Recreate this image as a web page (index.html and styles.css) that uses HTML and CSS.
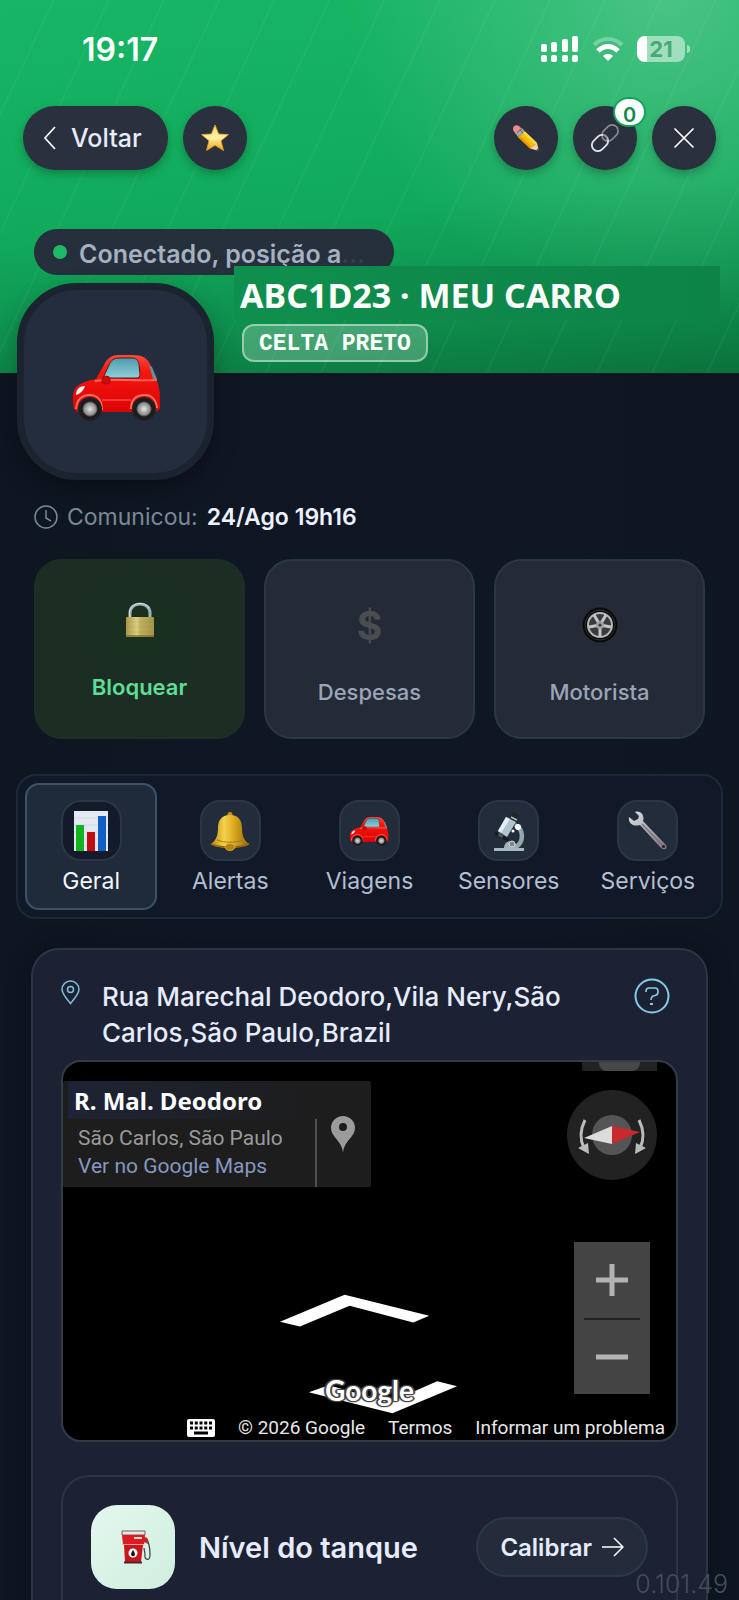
FILE: index.html
```html
<!DOCTYPE html>
<html lang="pt-BR">
<head>
    <meta charset="UTF-8">
    <meta name="viewport" content="width=device-width, initial-scale=1.0">
    <title>ABC1D23 · Meu Carro</title>
    <link rel="stylesheet" href="styles.css">
</head>
<body>

    <!-- shared icons -->
    <svg class="defs" width="0" height="0" aria-hidden="true">
        <defs>
            <linearGradient id="car-red" x1="0" y1="0" x2="0" y2="1">
                <stop offset="0" stop-color="#ff4a3c"/>
                <stop offset="0.3" stop-color="#f8150f"/>
                <stop offset="1" stop-color="#d80505"/>
            </linearGradient>
            <linearGradient id="car-glass" x1="0" y1="0" x2="0" y2="1">
                <stop offset="0" stop-color="#4d9bac"/>
                <stop offset="1" stop-color="#8fd0da"/>
            </linearGradient>
            <radialGradient id="car-wheel">
                <stop offset="0" stop-color="#e4e4e4"/>
                <stop offset="0.5" stop-color="#8c8c8c"/>
                <stop offset="0.58" stop-color="#555"/>
                <stop offset="0.66" stop-color="#1a1a1a"/>
                <stop offset="1" stop-color="#222"/>
            </radialGradient>
            <linearGradient id="gold" x1="0" y1="0" x2="1" y2="0">
                <stop offset="0" stop-color="#b98412"/>
                <stop offset="0.35" stop-color="#f6d24c"/>
                <stop offset="0.6" stop-color="#dcaa20"/>
                <stop offset="1" stop-color="#96690b"/>
            </linearGradient>
            <linearGradient id="star-fill" x1="0" y1="0" x2="0" y2="1">
                <stop offset="0" stop-color="#ffd86b"/>
                <stop offset="0.5" stop-color="#fff0a8"/>
                <stop offset="1" stop-color="#f5a30c"/>
            </linearGradient>
            <linearGradient id="brass" x1="0" y1="0" x2="1" y2="0">
                <stop offset="0" stop-color="#a99845"/>
                <stop offset="0.4" stop-color="#dccf84"/>
                <stop offset="0.5" stop-color="#c2b25c"/>
                <stop offset="1" stop-color="#a4934a"/>
            </linearGradient>
            <linearGradient id="steel" x1="0" y1="0" x2="1" y2="1">
                <stop offset="0" stop-color="#e2e4ea"/>
                <stop offset="0.5" stop-color="#a7a9b2"/>
                <stop offset="1" stop-color="#7d6f73"/>
            </linearGradient>
        </defs>
        <symbol id="car" viewBox="0 0 90 68">
            <path d="M2 47 C1 40 4 34 8 32 C14 28 20 27 25 26 L33 12 C36 5 41 2 48 2 L62 2 C71 2 76 5 79 11 L85 26 C88 32 89 38 89 46 L89 55 C88 58 85 59 80 59 L8 59 C3 59 2 54 2 47 Z" fill="url(#car-red)"/>
            <path d="M81 14 L86 26 L82 26 L78 12 Z" fill="#6f8f96"/>
            <path d="M32 25 L38 12 C40 7 43 5 48 5 L61 5 C65 5 67 7 68 11 L69 21 C69 24 68 25 65 25 Z" fill="url(#car-glass)" stroke="#5a1518"/>
            <path d="M24 28 C40 25 60 28 86 27" fill="none" stroke="#ff8a7c" stroke-width="2" opacity=".7"/>
            <path d="M31 47 H60" stroke="#ff6b5d" stroke-width="1"/>
            <path d="M31 27 q0 -4 4 -4 q4 0 4 3 v4 q-4 2 -8 0 Z" fill="#d10a0a" stroke="#8d0707" stroke-width=".7"/>
            <path d="M5 42 C5 36 9 33 14 33 C13 37 9 41 5 42 Z" fill="#fff2ef"/>
            <path d="M5 56 C6 44 13 42 19 42 C26 42 31 47 31 57" fill="none" stroke="#ff6c5c" stroke-width="2"/>
            <path d="M60 56 C60 45 67 42 74 42 C80 42 85 46 86 55" fill="none" stroke="#ff6c5c" stroke-width="2"/>
            <circle cx="19" cy="56" r="12" fill="url(#car-wheel)"/>
            <circle cx="73" cy="56" r="12" fill="url(#car-wheel)"/>
            <path d="M74 3 L77 0" stroke="#333" stroke-width="1"/>
        </symbol>
    </svg>

    <div class="app">
        <header class="hero">
            <div class="status-bar">
                <time class="clock">19:17</time>
                <div class="status-icons">
                    <svg width="38" height="26" viewBox="0 0 38 26" fill="#fff" aria-hidden="true">
                        <rect x="0" y="8" width="6" height="8" rx="2"/>
                        <rect x="10" y="6" width="6" height="10" rx="2"/>
                        <rect x="21" y="3" width="6" height="13" rx="2"/>
                        <rect x="31" y="0" width="6" height="16" rx="2"/>
                        <rect x="0" y="19" width="6" height="7" rx="2"/>
                        <rect x="10" y="19" width="6" height="7" rx="2"/>
                        <rect x="21" y="19" width="6" height="7" rx="2"/>
                        <rect x="31" y="19" width="6" height="7" rx="2"/>
                    </svg>
                    <svg width="32" height="26" viewBox="0 0 32 26" fill="none" aria-hidden="true">
                        <path d="M2 9 C10 1 22 1 30 9" stroke="#fff" stroke-width="4" opacity=".3"/>
                        <path d="M6 15 C12 9 20 9 26 15" stroke="#fff" stroke-width="5"/>
                        <path d="M16 25 L11 20 C14 17 18 17 21 20 Z" fill="#fff"/>
                    </svg>
                    <div class="battery"><span class="battery-level">21</span></div>
                </div>
            </div>

            <nav class="top-nav">
                <button class="back-btn" type="button">
                    <svg width="14" height="26" viewBox="0 0 14 26" fill="none" stroke="#fff" stroke-width="1.700" aria-hidden="true"><path d="M12 2 L2 13 L12 24"/></svg>
                    Voltar
                </button>
                <button class="round-btn" type="button" aria-label="Favorito">
                    <svg width="28" height="28" viewBox="0 0 28 28" aria-hidden="true">
                        <path d="M14 1 L17.600 10 L27.500 10.500 L20 16.800 L22.500 26.500 L14 21.300 L5.500 26.500 L8 16.800 L.5 10.500 L10.400 10 Z" fill="url(#star-fill)" stroke="#f0a21c" stroke-width=".8" stroke-linejoin="round"/>
                    </svg>
                </button>
                <div class="top-actions">
                    <button class="round-btn" type="button" aria-label="Editar">
                        <svg width="28" height="28" viewBox="0 0 28 28" aria-hidden="true">
                            <path d="M1 5 C1 2 4 0 7 2 L10 5 L4 10 L1.500 7 Z" fill="#f08a8d"/>
                            <path d="M10 4 L13 7.500 L6 13 L3.500 9.500 Z" fill="#a3a6ac"/>
                            <path d="M8 5.700 L11 9.200 M10 4.500 L5 8.500" stroke="#62656c" stroke-width="1"/>
                            <path d="M13 7.500 L25 19 L18 24.500 L6 13 Z" fill="#fbbd0b"/>
                            <path d="M13 7.500 L25 19 L23 20.500 L11 9 Z" fill="#ffd84a"/>
                            <path d="M6 13 L18 24.500 L20 23 L8 11.400 Z" fill="#e69a05"/>
                            <path d="M25 19 L27 27 L18 24.500 Z" fill="#f4d29b"/>
                            <path d="M26.300 24.300 L27 27 L24.200 26.200 Z" fill="#333"/>
                        </svg>
                    </button>
                    <button class="round-btn" type="button" aria-label="Compartilhar">
                        <svg width="28" height="28" viewBox="0 0 28 28" fill="none" aria-hidden="true">
                            <rect x="10" y="3" width="18" height="12" rx="6" transform="rotate(-45 19 9)" stroke="#8b8b93" stroke-width="1.600"/>
                            <rect x="0" y="13" width="18" height="12" rx="6" transform="rotate(-45 9 19)" stroke="#e2e3e8" stroke-width="1.800"/>
                            <path d="M12 11 q4 0 4 5" stroke="#8b8b93" stroke-width="1.600"/>
                        </svg>
                        <span class="badge">0</span>
                    </button>
                    <button class="round-btn" type="button" aria-label="Fechar">
                        <svg width="20" height="20" viewBox="0 0 20 20" stroke="#fff" stroke-width="1.700" stroke-linecap="round" aria-hidden="true"><path d="M1 1 L19 19 M19 1 L1 19"/></svg>
                    </button>
                </div>
            </nav>

            <div class="connection">
                <span class="dot"></span>
                <span class="connection-text">Conectado, posição a<span class="faint">…</span></span>
            </div>

            <div class="identity">
                <div class="avatar">
                    <svg width="90" height="68" aria-hidden="true"><use href="#car"/></svg>
                </div>
                <div class="identity-info">
                    <h1>ABC1D23 · MEU CARRO</h1>
                    <span class="model">CELTA PRETO</span>
                </div>
            </div>
        </header>

        <main>
            <p class="last-seen">
                <svg width="24" height="24" viewBox="0 0 24 24" fill="none" stroke="#7d8797" stroke-width="1.500" aria-hidden="true"><circle cx="12" cy="12" r="11"/><path d="M12 5 V13 L17 16"/></svg>
                <span>Comunicou:</span>
                <strong>24/Ago 19h16</strong>
            </p>

            <section class="actions">
                <button class="action action-lock" type="button">
                    <span class="action-icon">
                        <svg width="30" height="36" viewBox="0 0 30 36" aria-hidden="true">
                            <path d="M5 17 V11 C5 -1 25 -1 25 11 V17" fill="none" stroke="#9fb0b8" stroke-width="3"/>
                            <path d="M4.500 16 V10 C5 0 21 -1 24 6" fill="none" stroke="#d5e2ea" stroke-width="1"/>
                            <rect x="1" y="15" width="28" height="20" rx="1" fill="url(#brass)"/>
                            <path d="M1 20 H29 M1 25 H29 M1 30 H29" stroke="#94853a" stroke-width=".6" opacity=".3"/>
                            <path d="M1 34 H29" stroke="#80702d" stroke-width="1.500"/>
                        </svg>
                    </span>
                    Bloquear
                </button>
                <button class="action" type="button">
                    <span class="action-icon dollar">$</span>
                    Despesas
                </button>
                <button class="action" type="button">
                    <span class="action-icon">
                        <svg width="36" height="36" viewBox="0 0 36 36" aria-hidden="true">
                            <circle cx="18" cy="18" r="17.500" fill="#0b0b0b"/>
                            <circle cx="18" cy="18" r="15" fill="none" stroke="#303030"/>
                            <circle cx="18" cy="18" r="12" fill="#393b3d" stroke="#b5b7ba" stroke-width="2"/>
                            <path d="M18 18 L12 8 M18 18 L24 8 M18 18 L29 20 M18 18 L18 29 M18 18 L7 20" stroke="#c3c5c8" stroke-width="3"/>
                            <circle cx="18" cy="18" r="4" fill="#9c9ea1"/>
                            <circle cx="18" cy="18" r="1.500" fill="#333"/>
                        </svg>
                    </span>
                    Motorista
                </button>
            </section>

            <nav class="tabs">
                <button class="tab active" type="button">
                    <span class="tab-icon">
                        <svg width="36" height="42" viewBox="0 0 36 42" aria-hidden="true">
                            <rect x="1" y="1" width="34" height="40" fill="#e3e9f2"/>
                            <path d="M1 8 H35 M1 15 H35 M1 22 H35 M1 29 H35 M1 36 H35" stroke="#cbd5e3" stroke-width=".7"/>
                            <rect x="3" y="15" width="8" height="26" fill="#12b31f"/>
                            <rect x="14" y="22" width="8" height="19" fill="#c00c12"/>
                            <rect x="25" y="6" width="8" height="35" fill="#0f5fc4"/>
                        </svg>
                    </span>
                    Geral
                </button>
                <button class="tab" type="button">
                    <span class="tab-icon">
                        <svg width="40" height="40" viewBox="0 0 40 40" aria-hidden="true">
                            <circle cx="20" cy="3.500" r="2.500" fill="#c4911b"/>
                            <path d="M20 4 C29 4 32 10 32 17 C32 26 35 30 39 33 C36 38 4 38 1 33 C5 30 8 26 8 17 C8 10 11 4 20 4 Z" fill="url(#gold)"/>
                            <path d="M1 33 C8 37 32 37 39 33" fill="none" stroke="#8d640d" stroke-width="1.500"/>
                            <path d="M7 29 C15 32 25 32 33 29" fill="none" stroke="#a87a13"/>
                            <ellipse cx="20" cy="36" rx="5" ry="3.500" fill="#b78216" stroke="#e7bd3e" stroke-width=".8"/>
                        </svg>
                    </span>
                    Alertas
                </button>
                <button class="tab" type="button">
                    <span class="tab-icon">
                        <svg width="40" height="30" aria-hidden="true"><use href="#car"/></svg>
                    </span>
                    Viagens
                </button>
                <button class="tab" type="button">
                    <span class="tab-icon">
                        <svg width="32" height="40" viewBox="0 0 32 40" aria-hidden="true">
                            <path d="M22 14 C31 18 31 31 23 36" fill="none" stroke="#96a7ae" stroke-width="4.500"/>
                            <path d="M2 22 L15 29" stroke="#171a1d" stroke-width="3"/>
                            <path d="M13 6 L23 11 L14 26 L5 20 Z" fill="#afc4ce"/>
                            <path d="M13 6 L17 8 L8 22 L5 20 Z" fill="#e4eef2"/>
                            <path d="M20 1 L26 4 L23 9 L17 6 Z" fill="#202428"/>
                            <path d="M18 6 L24 9" stroke="#aeb9be" stroke-width="1.500"/>
                            <path d="M6 21 L11 24 L9 27 L5 25 Z" fill="#4a5358"/>
                            <circle cx="25" cy="16" r="3" fill="#fff"/>
                            <circle cx="20" cy="20" r="1.500" fill="#fff"/>
                            <path d="M11 37 C11 28 24 28 24 37 Z" fill="#a1b1b8"/>
                            <circle cx="19" cy="33" r="3" fill="#79898f" stroke="#cfd9dd"/>
                            <path d="M1 37 H31 V40 H1 Z" fill="#a6b8c2"/>
                        </svg>
                    </span>
                    Sensores
                </button>
                <button class="tab" type="button">
                    <span class="tab-icon">
                        <svg width="40" height="40" viewBox="0 0 40 40" aria-hidden="true">
                            <path d="M7 1 C13 -1 17 5 15 10 L37 33 C41 37 37 40 33 37 L12 14 C6 16 0 13 1 6 L6 10 L10 8 L11 5 Z" fill="url(#steel)"/>
                            <path d="M14 13 L34 34" stroke="#7c737a" stroke-width="1.200"/>
                            <circle cx="35.500" cy="35.500" r="1.600" fill="#2a2226"/>
                        </svg>
                    </span>
                    Serviços
                </button>
            </nav>

            <section class="panel">
                <div class="address">
                    <svg class="pin" width="19" height="25" viewBox="0 0 19 25" fill="none" stroke="#7fc3e0" stroke-width="1.500" aria-hidden="true"><path d="M9.500 23.500 C4 17 1 13 1 9.500 A8.500 8.500 0 0 1 18 9.500 C18 13 15 17 9.500 23.500 Z"/><circle cx="9.500" cy="9.500" r="3"/></svg>
                    <p>Rua Marechal Deodoro,Vila Nery,São Carlos,São Paulo,Brazil</p>
                    <button class="help" type="button" aria-label="Ajuda">
                        <svg width="36" height="36" viewBox="0 0 36 36" fill="none" stroke="#86cbe8" stroke-width="2" aria-hidden="true"><circle cx="18" cy="18" r="16.500"/><path d="M12 14 V13 Q12 10 15 10 H21 Q24 10 24 13 V14 Q24 17 21 17.500 Q17 18 17 22" stroke-width="1.600"/><path d="M16 26 H19"/></svg>
                    </button>
                </div>

                <div class="street-view">
                    <svg class="scene" viewBox="0 0 616 380" fill="#fff" aria-hidden="true">
                        <path d="M218 261 L283 234 L368 255 L352 262 L288 245 L238 266 Z"/>
                        <path d="M247 332 L267 325 L328 342 L376 321 L396 326 L331 353 Z"/>
                    </svg>
                    <div class="sv-tab"></div>
                    <div class="place">
                        <div class="place-text">
                            <h2>R. Mal. Deodoro</h2>
                            <p>São Carlos, São Paulo</p>
                            <a href="#">Ver no Google Maps</a>
                        </div>
                        <svg width="24" height="37" viewBox="0 0 24 37" fill="#9b9b9b" aria-hidden="true"><path fill-rule="evenodd" d="M12 36.500 C11 25 0 21 0 12 A12 12 0 0 1 24 12 C24 21 13 25 12 36.500 Z M12 7 A4 4 0 1 0 12 15 A4 4 0 1 0 12 7 Z"/></svg>
                    </div>
                    <button class="compass" type="button" aria-label="Girar a visualização">
                        <svg width="90" height="90" viewBox="0 0 90 90" aria-hidden="true">
                            <circle cx="45" cy="45" r="45" fill="#222"/>
                            <circle cx="45" cy="45" r="20" fill="#555"/>
                            <path d="M17 48 L45 36 V54 Z" fill="#dcdcdc"/>
                            <path d="M73 42 L45 36 V54 Z" fill="#c9282d"/>
                            <path d="M18 30 C13 40 13 50 17 58 M72 30 C77 40 77 50 73 58" fill="none" stroke="#bbb" stroke-width="3"/>
                            <path d="M11 58 L21 53 L22 64 Z M79 58 L69 53 L68 64 Z" fill="#bbb"/>
                        </svg>
                    </button>
                    <div class="zoom">
                        <button type="button" aria-label="Aumentar zoom">
                            <svg width="32" height="32" viewBox="0 0 32 32" stroke="#b3b3b3" stroke-width="5" aria-hidden="true"><path d="M0 16 H32 M16 0 V32"/></svg>
                        </button>
                        <button type="button" aria-label="Diminuir zoom">
                            <svg width="32" height="32" viewBox="0 0 32 32" stroke="#b3b3b3" stroke-width="5" aria-hidden="true"><path d="M0 16 H32"/></svg>
                        </button>
                    </div>
                    <span class="google">Google</span>
                    <div class="sv-footer">
                        <svg width="28" height="18" viewBox="0 0 28 18" aria-hidden="true">
                            <rect width="28" height="18" rx="2" fill="#fff"/>
                            <path d="M3 4 H25 M3 9 H25" stroke="#000" stroke-width="3" stroke-dasharray="3 1.750"/>
                            <path d="M7 14 H21" stroke="#000" stroke-width="3"/>
                        </svg>
                        <span>© 2026 Google</span>
                        <a href="#">Termos</a>
                        <a href="#">Informar um problema</a>
                    </div>
                </div>

                <div class="tank">
                    <div class="tank-icon">
                        <svg width="30" height="34" viewBox="0 0 30 34" aria-hidden="true">
                            <path d="M23 8 L26 9 C29 15 29 20 29 25 C29 32 23 30 24 24 L23 18" fill="none" stroke="#454a4a" stroke-width="1.300"/>
                            <path d="M22 6 L26 8 L27 14 L23 12 Z" fill="#d41b22"/>
                            <path d="M1 1 H24 V5 H1 Z" fill="#e5e7e7" stroke="#5b3b3d" stroke-width=".8"/>
                            <path d="M1 5 H24 L23 15 H2 Z" fill="#dc1c22"/>
                            <path d="M3 15 H22 L20 32 H4 Z" fill="#c9161c"/>
                            <path d="M1.500 14.500 H23" stroke="#eba0a0" stroke-width="1"/>
                            <rect x="13" y="7" width="8" height="2" fill="#f5dada"/>
                            <circle cx="12" cy="23" r="4.500" fill="#fff"/>
                            <path d="M12 20 C15 24 14 26 12 26 C10 26 9 24 12 20 Z" fill="#111"/>
                            <path d="M3 32.500 H21" stroke="#4c2628" stroke-width="2"/>
                        </svg>
                    </div>
                    <h2>Nível do tanque</h2>
                    <button class="calibrate" type="button">
                        Calibrar
                        <svg width="22" height="20" viewBox="0 0 22 20" fill="none" stroke="#fff" stroke-width="1.500" aria-hidden="true"><path d="M0 10 H20 M12 1 L21 10 L12 19"/></svg>
                    </button>
                </div>
            </section>
        </main>

        <span class="version">0.101.49</span>
    </div>

</body>
</html>
```
FILE: styles.css
```css
* {
    box-sizing: border-box;
}

body {
    margin: 0;
    font-family: Inter, "Noto Sans", sans-serif;
    background-color: #0f1723;
    color: #e6ecfb;
}

h1, h2, p {
    margin: 0;
}

button {
    font: inherit;
    color: inherit;
    border: none;
    background: none;
    padding: 0;
    cursor: pointer;
}

a {
    color: inherit;
    text-decoration: none;
}

svg {
    display: block;
    flex-shrink: 0;
}

.defs {
    position: absolute;
}

.app {
    position: relative;
    height: 100vh;
    overflow: hidden;
    background: linear-gradient(90deg, #0d1621, #101724 30%, #101724 70%, #0d1621);
}

/* hero */

.hero {
    padding: 32px 23px 0;
    background:
        repeating-linear-gradient(115deg, transparent 0 47px, rgba(255, 255, 255, 0.04) 48px 49px, transparent 50px),
        radial-gradient(circle at 90% 0, rgba(255, 255, 255, 0.22), transparent 320px),
        linear-gradient(175deg, #17b664 0%, #11aa5b 55%, #0e8f4d 80%, #0b723d 100%);
}

.status-bar {
    display: flex;
    justify-content: space-between;
    align-items: center;
    height: 34px;
    padding: 0 26px 0 59px;
}

.clock {
    font-size: 32px;
    font-weight: 600;
    color: #fff;
}

.status-icons {
    display: flex;
    align-items: center;
    gap: 13px;
}

.battery {
    position: relative;
    display: flex;
    align-items: center;
    justify-content: center;
    width: 48px;
    height: 26px;
    margin-right: 5px;
    border-radius: 8px;
    background: linear-gradient(90deg, #fff 21%, rgba(255, 255, 255, 0.5) 21%);
}

.battery::after {
    content: "";
    position: absolute;
    right: -5px;
    top: 9px;
    width: 3px;
    height: 8px;
    border-radius: 0 3px 3px 0;
    background-color: rgba(255, 255, 255, 0.5);
}

.battery-level {
    font-size: 22px;
    font-weight: 700;
    color: #4aa877;
}

.top-nav {
    display: flex;
    gap: 15px;
    margin-top: 40px;
}

.top-actions {
    display: flex;
    gap: 15px;
    margin-left: auto;
}

.back-btn, .round-btn {
    display: flex;
    align-items: center;
    justify-content: center;
    height: 64px;
    background-color: #2a303d;
    box-shadow: 0 4px 10px rgba(0, 0, 0, 0.25);
}

.back-btn {
    gap: 14px;
    padding: 0 26px 0 20px;
    border-radius: 32px;
    font-size: 25px;
    font-weight: 500;
}

.round-btn {
    position: relative;
    width: 64px;
    border-radius: 50%;
}

.badge {
    position: absolute;
    top: -9px;
    right: -9px;
    min-width: 33px;
    height: 30px;
    padding-top: 4px;
    border: 2px solid #12a55a;
    border-radius: 15px;
    background-color: #fff;
    color: #0f8a4b;
    font-size: 20px;
    font-weight: 600;
    line-height: 24px;
    text-align: center;
}

.connection {
    display: flex;
    align-items: center;
    gap: 12px;
    width: 360px;
    height: 46px;
    margin: 59px 0 0 11px;
    padding: 0 19px;
    border-radius: 23px;
    background-color: #25303c;
    color: #a5b1c0;
    font-size: 25px;
    font-weight: 600;
}

.connection-text {
    padding-top: 3px;
    white-space: nowrap;
}

.faint {
    opacity: 0.1;
}

.dot {
    width: 14px;
    height: 14px;
    border-radius: 50%;
    background-color: #1fb968;
}

/* title strip overlaps the connection pill, avatar hangs below the hero */
.identity {
    position: relative;
    display: flex;
    align-items: flex-start;
    margin: -9px -4px 0 -6px;
}

.avatar {
    display: flex;
    align-items: center;
    justify-content: center;
    width: 197px;
    height: 197px;
    margin: 17px 20px -107px 0;
    flex-shrink: 0;
    border: 7px solid #1b232f;
    border-radius: 60px;
    background-color: #242d3d;
    box-shadow: 0 10px 24px rgba(0, 0, 0, 0.3);
}

.avatar svg {
    margin-top: 10px;
}

.identity-info {
    flex: 1;
}

.identity h1 {
    height: 54px;
    padding-left: 6px;
    background: linear-gradient(90deg, #0f8f4e, #0d8347);
    color: #fff;
    font-family: "Noto Sans", sans-serif;
    font-size: 34px;
    font-weight: 700;
    line-height: 58px;
    white-space: nowrap;
}

.model {
    display: inline-block;
    height: 38px;
    margin: 4px 0 0 8px;
    padding: 0 15px;
    border: 2px solid rgba(255, 255, 255, 0.45);
    border-radius: 12px;
    background-color: rgba(255, 255, 255, 0.22);
    color: #fff;
    font-family: "Liberation Mono", monospace;
    font-size: 23px;
    font-weight: 700;
    line-height: 36px;
}

/* last position */

.last-seen {
    display: flex;
    align-items: center;
    gap: 9px;
    height: 30px;
    margin: 129px 34px 0;
    font-size: 23px;
    color: #7d8797;
}

.last-seen strong {
    font-weight: 600;
    color: #eef2ff;
}

/* quick actions */

.actions {
    display: grid;
    grid-template-columns: repeat(3, 1fr);
    gap: 19px;
    margin: 27px 34px 0;
}

.action {
    display: flex;
    flex-direction: column;
    align-items: center;
    justify-content: center;
    gap: 32px;
    height: 180px;
    padding-top: 10px;
    border: 2px solid #2d3644;
    border-radius: 28px;
    background-color: #242b36;
    color: #9aa5b8;
    font-size: 22px;
    font-weight: 500;
}

.action-lock {
    padding-top: 0;
    border-color: #1c2f24;
    background: radial-gradient(circle at 50% 38%, #18311e, #1c2d24 45%);
    color: #5fdc95;
    font-weight: 600;
}

.action-icon {
    display: flex;
    align-items: center;
    height: 44px;
}

.dollar {
    font-size: 39px;
    font-weight: 700;
    color: #4a4d50;
}

/* tabs */

.tabs {
    display: grid;
    grid-template-columns: repeat(5, 1fr);
    gap: 7px;
    margin: 35px 16px 0;
    padding: 7px;
    border: 2px solid #1f2836;
    border-radius: 20px;
    background-color: #111827;
}

.tab {
    display: flex;
    flex-direction: column;
    align-items: center;
    gap: 5px;
    height: 127px;
    padding-top: 15px;
    border: 2px solid transparent;
    border-radius: 14px;
    color: #b4bed2;
    font-size: 23px;
    line-height: 30px;
}

.tab.active {
    border-color: #3b5368;
    background-color: #1f2a3b;
    color: #f4f7ff;
}

.tab-icon {
    display: flex;
    align-items: center;
    justify-content: center;
    width: 61px;
    height: 61px;
    border: 2px solid #2c3646;
    border-radius: 20px;
    background-color: #232c3a;
}

.tab.active .tab-icon {
    background-color: #131b2a;
}

/* location panel */

.panel {
    margin: 29px 31px 0;
    padding: 28px;
    border: 2px solid #2b3545;
    border-radius: 28px;
    background-color: #1c2233;
    box-shadow: 0 0 24px rgba(0, 0, 0, 0.25);
}

.address {
    display: flex;
    align-items: flex-start;
}

.pin {
    margin-top: 2px;
}

.address p {
    flex: 1;
    margin-left: 22px;
    padding-top: 1px;
    font-size: 26px;
    font-weight: 500;
    line-height: 36px;
}

.help {
    margin-right: 8px;
}

.street-view {
    position: relative;
    height: 382px;
    margin-top: 9px;
    border: 2px solid #333b49;
    border-radius: 20px;
    background-color: #000;
    font-family: Roboto, sans-serif;
    overflow: hidden;
}

.scene {
    position: absolute;
    inset: 0;
    width: 100%;
    height: 100%;
}

.sv-tab {
    position: absolute;
    top: 0;
    right: 19px;
    width: 75px;
    height: 9px;
    background-color: #222;
}

.sv-tab::before {
    content: "";
    display: block;
    width: 41px;
    height: 9px;
    margin-left: 17px;
    border-radius: 0 0 8px 8px;
    background-color: #484848;
}

.place {
    position: absolute;
    top: 19px;
    left: 0;
    display: flex;
    align-items: center;
    gap: 14px;
    padding-right: 16px;
    border-radius: 2px;
    background-color: #1d1d1d;
}

.place-text {
    width: 254px;
    height: 106px;
    background: linear-gradient(#505050, #505050) right bottom / 2px 68px no-repeat;
    color: #9a9a9a;
    font-size: 21px;
    line-height: 28px;
    white-space: nowrap;
}

.place h2 {
    height: 38px;
    margin: 0 0 5px 5px;
    padding-left: 6px;
    background: linear-gradient(90deg, #1e2436, #1d1d1d);
    color: #fff;
    font-family: "Noto Sans", sans-serif;
    font-size: 24px;
    font-weight: 700;
    line-height: 40px;
}

.place p, .place a {
    display: block;
    margin-left: 15px;
}

.place a {
    color: #8798c0;
}

.compass {
    position: absolute;
    top: 28px;
    right: 19px;
}

.zoom {
    position: absolute;
    right: 26px;
    bottom: 46px;
    width: 76px;
    background-color: #444;
}

.zoom button {
    display: flex;
    align-items: center;
    justify-content: center;
    width: 56px;
    height: 76px;
    margin: 0 auto;
}

.zoom button + button {
    border-top: 2px solid #222;
}

.google {
    position: absolute;
    left: 0;
    right: 0;
    bottom: 32px;
    color: #fff;
    font-family: Lato, sans-serif;
    font-size: 28px;
    font-weight: 700;
    line-height: 36px;
    text-align: center;
    text-shadow: 1px 1px 1px #444, -1px -1px 1px #444, 1px -1px 1px #444, -1px 1px 1px #444, 2px 0 1px #444, -2px 0 1px #444;
    pointer-events: none;
}

.sv-footer {
    position: absolute;
    right: 11px;
    bottom: 0;
    display: flex;
    align-items: center;
    gap: 23px;
    color: #e8e8e8;
    font-size: 19px;
    line-height: 24px;
    white-space: nowrap;
}

/* fuel tank */

.tank {
    display: flex;
    align-items: center;
    height: 180px;
    margin-top: 33px;
    padding: 0 28px 36px;
    border: 2px solid #2b3545;
    border-radius: 28px;
}

.tank-icon {
    display: flex;
    align-items: center;
    justify-content: center;
    width: 84px;
    height: 84px;
    border-radius: 26px;
    background: linear-gradient(135deg, #e4f7ee, #cfefdf);
}

.tank-icon svg {
    margin-left: 5px;
}

.tank h2 {
    margin-left: 24px;
    font-size: 29px;
    font-weight: 600;
}

.calibrate {
    display: flex;
    align-items: center;
    gap: 10px;
    height: 60px;
    margin-left: auto;
    padding: 0 22px;
    border: 2px solid #2d3747;
    border-radius: 30px;
    background-color: #242c3b;
    font-size: 24px;
    font-weight: 600;
}

.version {
    position: absolute;
    right: 11px;
    bottom: 1px;
    color: #454d5b;
    font-size: 25px;
    font-weight: 300;
    line-height: 30px;
}
```
